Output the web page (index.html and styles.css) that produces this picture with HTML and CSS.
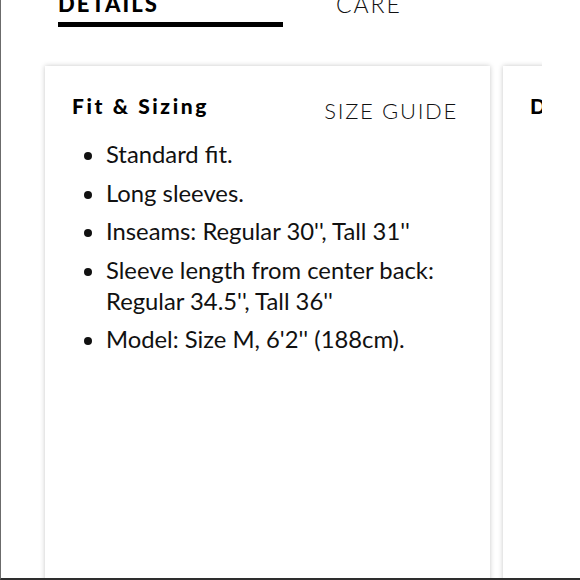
FILE: index.html
```html
<!DOCTYPE html>
<html>
<head>
<meta charset="utf-8">
<link rel="stylesheet" href="styles.css">
</head>
<body>
<div class="screen">
  <div class="tabs">
    <div class="tab tab-active">DETAILS</div>
    <div class="tab tab-care">CARE</div>
  </div>
  <div class="cards">
    <div class="card">
      <div class="card-head">
        <h2 class="card-title">Fit &amp; Sizing</h2>
        <span class="size-guide">SIZE GUIDE</span>
      </div>
      <ul class="facts">
        <li>Standard fit.</li>
        <li>Long sleeves.</li>
        <li>Inseams: Regular 30'', Tall 31''</li>
        <li>Sleeve length from center back: Regular 34.5'', Tall 36''</li>
        <li>Model: Size M, 6'2'' (188cm).</li>
      </ul>
    </div>
    <div class="card card-next">
      <div class="card-head">
        <h2 class="card-title">Details</h2>
      </div>
    </div>
  </div>
</div>
</body>
</html>
```
FILE: styles.css
```css
* { box-sizing: border-box; }
html, body { margin: 0; padding: 0; background: #fff; }
body {
  font-family: Lato, "Liberation Sans", sans-serif;
  color: #1a1a1a;
  width: 580px;
  height: 580px;
  overflow: hidden;
}
.screen {
  height: 580px;
  border-left: 1px solid #6b6b6b;
  border-bottom: 2px solid #2e2e2e;
  overflow: hidden;
}
.tabs {
  display: flex;
  margin-top: -10px;
  height: 40px;
}
.tab {
  font-size: 22px;
  letter-spacing: 2px;
  line-height: 28px;
}
.tab-active {
  width: 225px;
  margin-left: 57px;
  font-weight: 900;
  color: #000;
  border-bottom: 5px solid #000;
  height: 37px;
}
.tab-care {
  margin-left: 53px;
  font-weight: 300;
  font-size: 23px;
  color: #111;
}
.cards {
  display: flex;
  gap: 13px;
  margin-top: 30px;
  padding-left: 44px;
  width: 541px;
  overflow: hidden;
  padding-top: 6px;
  height: 540px;
}
.card {
  flex: 0 0 445px;
  background: #fff;
  box-shadow: 0 0 5px rgba(0,0,0,0.22);
  padding: 26px 32px 0 27px;
}
.card-next { flex: 0 0 200px; }
.card-head {
  display: flex;
  justify-content: space-between;
  align-items: flex-start;
  height: 30px;
}
.card-title {
  margin: 0;
  font-size: 21px;
  line-height: 28px;
  font-weight: 900;
  letter-spacing: 2.6px;
  color: #000;
}
.size-guide {
  font-size: 22px;
  line-height: 28px;
  margin-top: 5px;
  font-weight: 300;
  letter-spacing: 1.7px;
  color: #111;
}
.facts {
  margin: 17px 0 0 0;
  padding: 0 0 0 34px;
  font-size: 23.8px;
  line-height: 31px;
  color: #111;
}
.facts li { margin-bottom: 7.5px; }
```
